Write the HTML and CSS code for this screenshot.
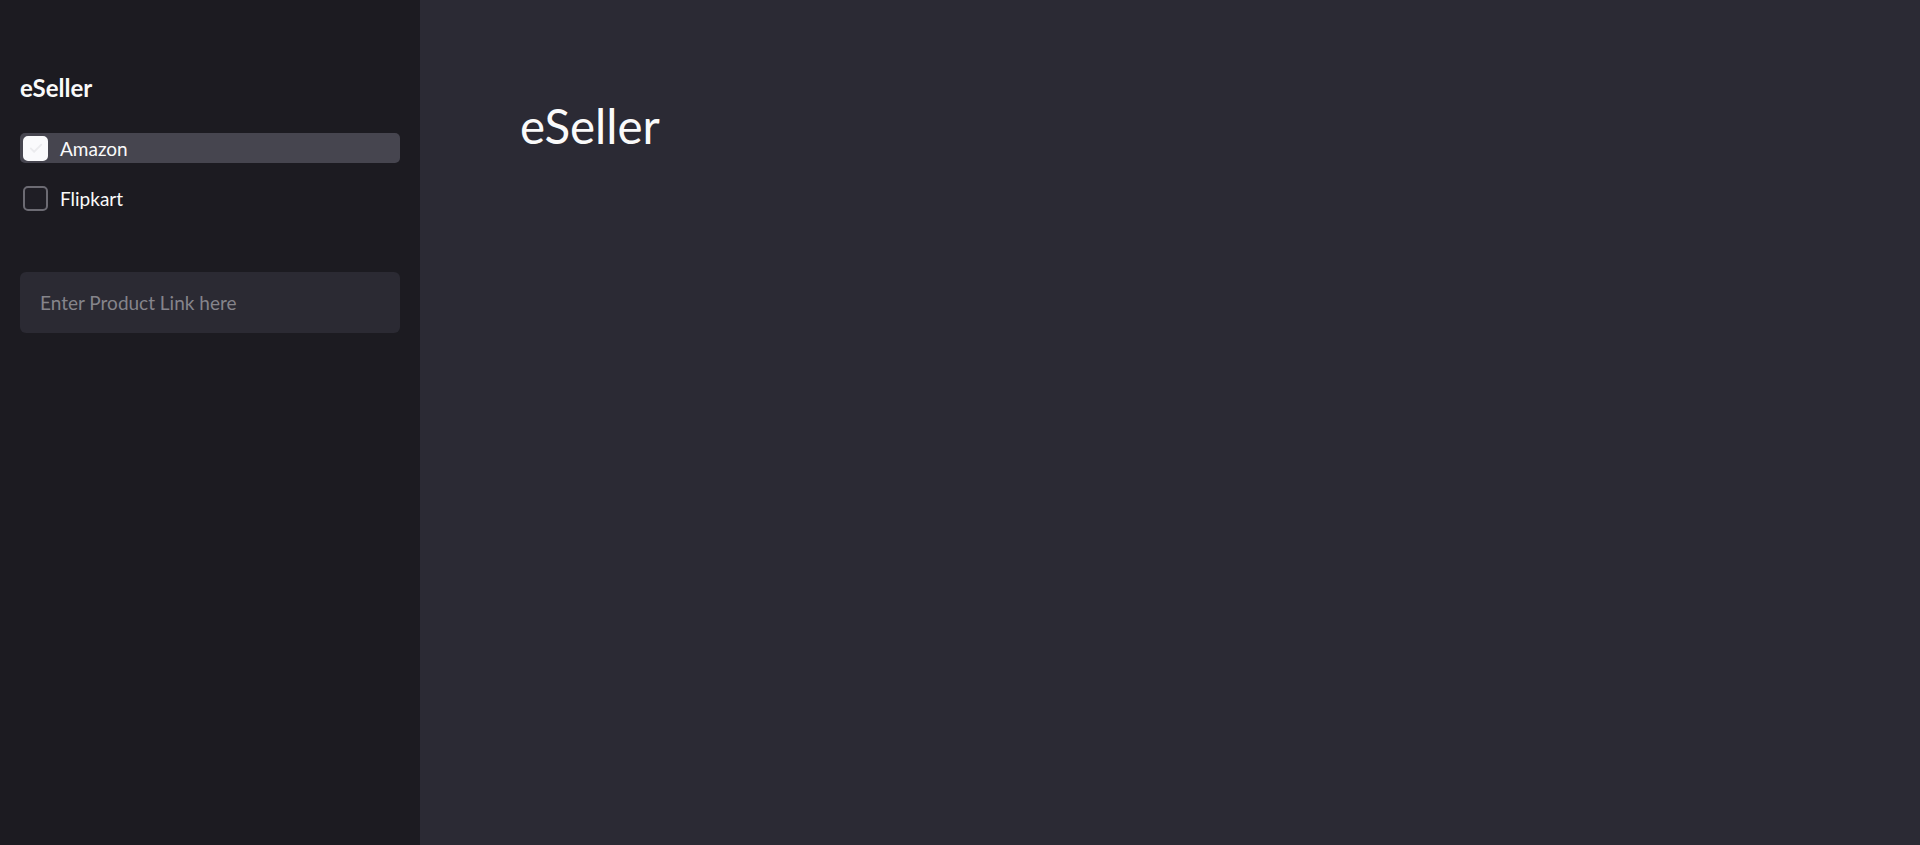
FILE: index.html
```html
<!DOCTYPE html>
<html lang="en">
<head>
<meta charset="utf-8">
<title>eSeller</title>
<link rel="stylesheet" href="styles.css">
</head>
<body>
<div class="app">
  <aside class="sidebar">
    <h2 class="side-title">eSeller</h2>
    <div class="checks">
      <label class="check checked">
        <span class="box">
          <svg viewBox="0 0 24 24" width="18" height="18"><path d="M5 12.5l4.5 4.5L19 7.5" fill="none" stroke="#ebebee" stroke-width="2.4" stroke-linecap="round" stroke-linejoin="round"/></svg>
        </span>
        <span class="label">Amazon</span>
      </label>
      <label class="check">
        <span class="box"></span>
        <span class="label">Flipkart</span>
      </label>
    </div>
    <div class="field">
      <input class="input" type="text" placeholder="Enter Product Link here">
    </div>
  </aside>
  <main class="main">
    <h1 class="title">eSeller</h1>
  </main>
</div>
</body>
</html>
```
FILE: styles.css
```css
* { box-sizing: border-box; }
html, body { margin: 0; padding: 0; height: 100%; }
body {
  font-family: "Lato", "Noto Sans", sans-serif;
  color: #fafafa;
  background: #2b2a34;
}
.app { display: flex; height: 845px; }
.sidebar {
  width: 420px;
  flex: none;
  background: #1c1b21;
  padding: 74px 20px 0 20px;
  display: flex;
  flex-direction: column;
}
.side-title {
  margin: 0;
  font-size: 24px;
  font-weight: 700;
  line-height: 28px;
}
.checks { display: flex; flex-direction: column; gap: 20px; margin-top: 31px; }
.check {
  display: flex;
  align-items: center;
  gap: 12px;
  height: 30px;
  padding-left: 3px;
  border-radius: 5px;
  font-size: 19px;
}
.check.checked { background: #46454f; }
.box {
  width: 25px; height: 25px;
  border-radius: 5px;
  border: 2px solid #6c6b73;
  background: #1f1e25;
  display: flex; align-items: center; justify-content: center;
}
.check.checked .box { background: #fafafc; border-color: #fafafc; }
.label { color: #fafafa; }
.field { margin-top: 59px; }
.input {
  width: 100%;
  height: 61px;
  border: none;
  border-radius: 6px;
  background: #2b2a33;
  padding: 0 20px;
  font-family: inherit;
  font-size: 19px;
  color: #fafafa;
  outline: none;
}
.input::placeholder { color: #85848b; }
.main { flex: 1; padding: 96px 100px; }
.title {
  margin: 0;
  font-size: 47.5px;
  font-weight: 400;
  line-height: 60px;
}
```
